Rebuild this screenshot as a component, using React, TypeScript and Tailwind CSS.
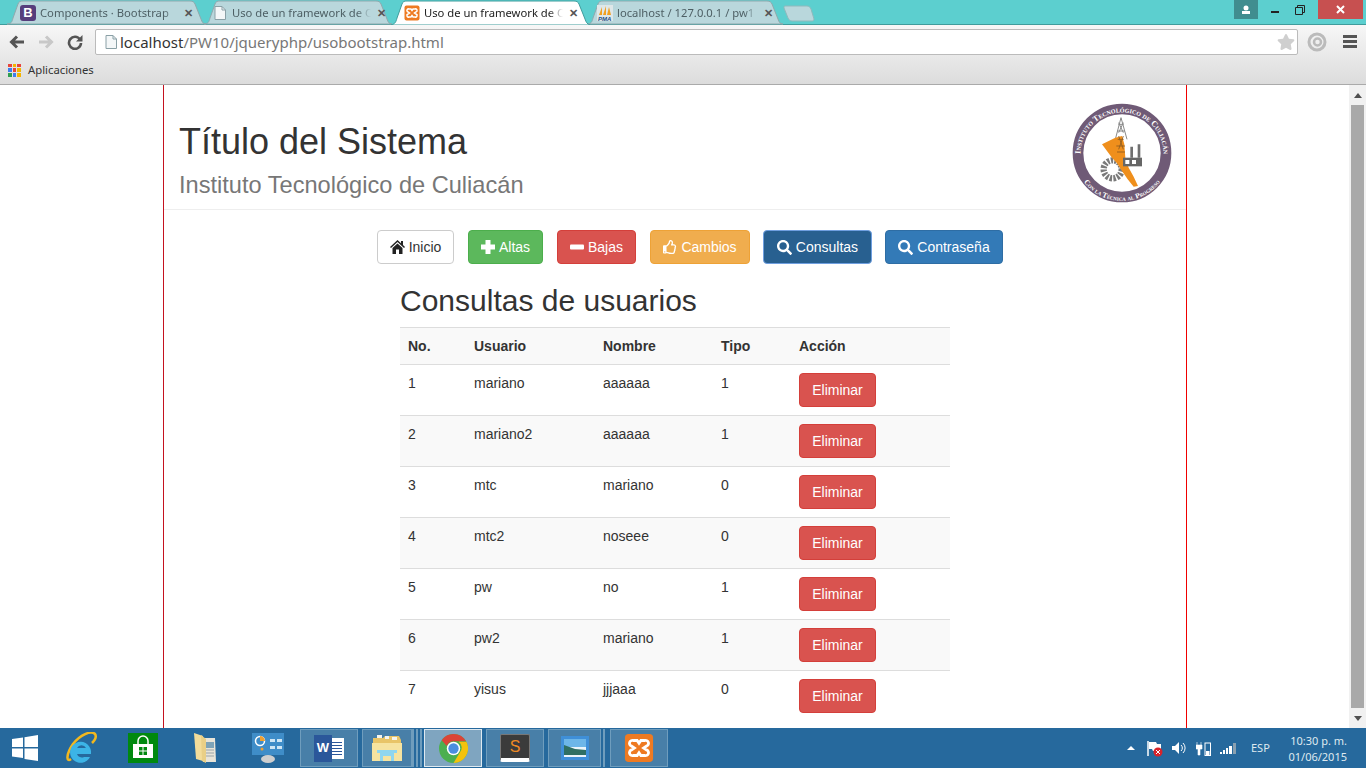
import React from 'react';
import { FaRegThumbsUp, FaSearch, FaStar } from 'react-icons/fa';

const usuarios = [
  { no: 1, usuario: 'mariano', nombre: 'aaaaaa', tipo: 1 },
  { no: 2, usuario: 'mariano2', nombre: 'aaaaaa', tipo: 1 },
  { no: 3, usuario: 'mtc', nombre: 'mariano', tipo: 0 },
  { no: 4, usuario: 'mtc2', nombre: 'noseee', tipo: 0 },
  { no: 5, usuario: 'pw', nombre: 'no', tipo: 1 },
  { no: 6, usuario: 'pw2', nombre: 'mariano', tipo: 1 },
  { no: 7, usuario: 'yisus', nombre: 'jjjaaa', tipo: 0 },
];

const BootstrapFav = () => (
  <div className="w-[16px] h-[16px] rounded-[3px] bg-[#563d7c] text-white text-[13px] font-bold flex items-center justify-center font-['Liberation_Sans',sans-serif]">B</div>
);

const PageFav = () => (
  <svg width="16" height="16" viewBox="0 0 16 16">
    <path d="M3 1.500h7l3.500 3.500v9.500H3z" fill="#f4f7f8" stroke="#8aa0a6" />
    <path d="M10 1.500V5h3.500" fill="none" stroke="#8aa0a6" />
  </svg>
);

const XamppIcon = ({ size = 16 }: { size?: number }) => (
  <svg width={size} height={size} viewBox="0 0 32 32">
    <rect x="1" y="1" width="30" height="30" rx="4" fill="#ee7a22" />
    <path d="M10 8h4l2 3 2-3h4a3 3 0 0 1 2 6l-3 2 3 2a3 3 0 0 1-2 6h-4l-2-3-2 3h-4a3 3 0 0 1-2-6l3-2-3-2a3 3 0 0 1 2-6z" fill="none" stroke="#fff" strokeWidth="3" />
  </svg>
);

const PmaFav = () => (
  <svg width="16" height="16" viewBox="0 0 16 16">
    <rect width="16" height="16" fill="#dfe7e8" />
    <path d="M2 10 5 2l0 8zM6 10l3-9 0 9zM10 10l2-8 2 8z" fill="#f0a020" />
    <text x="1" y="15.500" fontSize="6" fontWeight="bold" fontStyle="italic" fill="#1d4f86" fontFamily="Liberation Sans">PMA</text>
  </svg>
);

type TabProps = { title: string; icon: React.ReactNode; active?: boolean; width: number; className: string };

const Tab = ({ title, icon, active, width, className }: TabProps) => (
  <div className={`relative h-[25px] shrink-0 ${className} ${active ? 'z-10 text-[#222]' : 'text-[#4d5f64]'}`} style={{ width }}>
    <svg className="absolute inset-0" width={width} height="25" viewBox={`0 0 ${width} 25`}>
      <path
        d={`M0 ${active ? 25 : 24} C4 24 5 22 6 18 L11 4 C12 1.500 13 1 16 1 L${width - 16} 1 C${width - 13} 1 ${width - 12} 2 ${width - 11} 4 L${width - 5} 19 C${width - 4} 22 ${width - 3} 24 ${width} ${active ? 25 : 24} Z`}
        fill={active ? '#fff' : '#b9d7dc'}
        stroke={active ? '#3f9c9c' : '#8fa9ad'}
        strokeWidth="1"
      />
    </svg>
    <div className="relative flex items-center h-[25px] pt-[1px]">
      <div className="w-[16px] h-[16px] shrink-0">{icon}</div>
      <span className="ml-[4px] flex-1 min-w-0 text-[11.250px] whitespace-nowrap [mask-image:linear-gradient(to_right,black_calc(100%-14px),transparent)]">{title}</span>
      <span className="ml-[5px] w-[10px] text-center text-[#555] text-[11px] font-bold font-['Liberation_Sans',sans-serif]">✕</span>
    </div>
  </div>
);

const BrowserChrome = () => (
  <div className="shrink-0 font-['Noto_Sans',sans-serif]">
    <div className="h-[25px] bg-[#5ccfcf] flex items-start relative">
      <div className="absolute left-0 right-0 bottom-0 h-[1px] bg-[#3f9c9c]" />
      <div className="flex pl-[7px]">
        <Tab title="Components · Bootstrap" icon={<BootstrapFav />} width={199} className="[&>div:last-child]:pl-[13px] [&>div:last-child]:pr-[13px]" />
        <Tab title="Uso de un framework de C" icon={<PageFav />} width={188} className="-ml-[2px] [&>div:last-child]:pl-[8px] [&>div:last-child]:pr-[6px]" />
        <Tab title="Uso de un framework de C" icon={<XamppIcon />} active width={199} className="-ml-[1px] [&>div:last-child]:pl-[13px] [&>div:last-child]:pr-[12px]" />
        <Tab title="localhost / 127.0.0.1 / pw1" icon={<PmaFav />} width={196} className="-ml-[3px] [&>div:last-child]:pl-[10px] [&>div:last-child]:pr-[10px]" />
        <svg className="mt-[5px] shrink-0" width="32" height="17" viewBox="0 0 32 17">
          <path d="M2 1h22c2 0 3 1 4 3l3 10c0 1.500-1 2-2 2H9c-2 0-3-1-4-3L1 3c0-1 0-2 1-2z" fill="#b9d7dc" stroke="#8fb9bc" />
        </svg>
      </div>
      <div className="ml-auto flex items-start relative">
        <div className="w-[24px] h-[19px] bg-[#408d8f] flex items-center justify-center">
          <svg width="10" height="10" viewBox="0 0 10 10"><circle cx="5" cy="3" r="2.500" fill="#fff" /><rect x="1" y="6" width="8" height="3" fill="#fff" /></svg>
        </div>
        <div className="w-[60px] h-[19px] flex items-center justify-center gap-[16px]">
          <div className="w-[8px] h-[2px] mt-[5px] bg-[#222]" />
          <svg width="10" height="10" viewBox="0 0 10 10"><path d="M0.500 2.500h7v7h-7zM2.500 2.500v-2h7v7h-2" fill="none" stroke="#222" /></svg>
        </div>
        <div className="w-[45px] h-[19px] mr-[3px] bg-[#c75050] flex items-center justify-center">
          <svg width="9" height="9" viewBox="0 0 9 9"><path d="M1 1l7 7M8 1L1 8" stroke="#fff" strokeWidth="2" /></svg>
        </div>
      </div>
    </div>
    <div className="h-[60px] bg-gradient-to-b from-[#f7f7f7] to-[#dcdcdc] border-b border-[#aaaaaa]">
      <div className="h-[31px] pt-[2px] flex items-center">
        <svg className="ml-[9px]" width="16" height="14" viewBox="0 0 16 14"><path d="M15 7H3M8 1.500 2.500 7 8 12.500" fill="none" stroke="#555" strokeWidth="3" /></svg>
        <svg className="ml-[13px]" width="16" height="14" viewBox="0 0 16 14"><path d="M1 7h12M8 1.500 13.500 7 8 12.500" fill="none" stroke="#c8c8c8" strokeWidth="3" /></svg>
        <svg className="ml-[13px]" width="16" height="16" viewBox="0 0 16 16"><path d="M13 5.500A6 6 0 1 0 14 9" fill="none" stroke="#555" strokeWidth="2.600" /><path d="M15.500 1v6.500H9z" fill="#555" /></svg>
        <div className="ml-[12px] w-[1203px] h-[26px] bg-white border border-[#bbbbbb] rounded-[2px] flex items-center pl-[7px] pr-[2px]">
          <PageFav />
          <span className="ml-[1px] mt-[1px] text-[15px] text-[#333]">localhost<span className="text-[#777]">/PW10/jqueryphp/usobootstrap.html</span></span>
          <FaStar className="ml-auto text-[#cfcfcf] text-[18px]" />
        </div>
        <svg className="ml-[9px]" width="20" height="20" viewBox="0 0 20 20"><circle cx="10" cy="10" r="8" fill="none" stroke="#bbb" strokeWidth="3" /><circle cx="10.500" cy="10" r="3.500" fill="none" stroke="#bbb" strokeWidth="2.500" /></svg>
        <div className="ml-[16px] w-[14px] flex flex-col gap-[2px]">
          <div className="h-[3px] bg-[#555]" />
          <div className="h-[3px] bg-[#555]" />
          <div className="h-[3px] bg-[#555]" />
        </div>
      </div>
      <div className="h-[28px] flex items-center pl-[8px] text-[11.300px] text-[#333]">
        <div className="grid grid-cols-3 gap-[1px] w-[13px] h-[13px]">
          {['#e8453c', '#f4b400', '#e8453c', '#3d7ef0', '#e8453c', '#f4b400', '#2e9e4f', '#3d7ef0', '#f4b400'].map((c, i) => (
            <div key={i} style={{ backgroundColor: c }} />
          ))}
        </div>
        <span className="ml-[7px]">Aplicaciones</span>
      </div>
    </div>
  </div>
);

const Logo = () => (
  <svg width="100" height="100" viewBox="65 41 300 300">
    <defs>
      <path id="arcTop" d="M91 205 A124.500 124.500 0 1 1 339 205" />
      <path id="arcBottom" d="M78 235 A144 144 0 0 0 352 235" />
    </defs>
    <circle cx="215" cy="191" r="132" fill="#fff" stroke="#6f5a76" strokeWidth="32" />
    <text fontSize="25" fontWeight="bold" fill="#fff" fontFamily="Liberation Serif" fontVariant="small-caps">
      <textPath href="#arcTop" startOffset="50%" textAnchor="middle">Instituto Tecnológico de Culiacán</textPath>
    </text>
    <text fontSize="22" fontWeight="bold" fill="#fff" fontFamily="Liberation Serif" fontVariant="small-caps">
      <textPath href="#arcBottom" startOffset="50%" textAnchor="middle">Con la Técnica al Progreso</textPath>
    </text>
    <circle cx="187" cy="240" r="27" fill="none" stroke="#7a7a7a" strokeWidth="19" strokeDasharray="7 4" />
    <path d="M212 85 195 150M212 85l18 65M204 105h16M200 125h24M205 100l14 30M219 100l-14 30" stroke="#8a8a8a" strokeWidth="3" fill="none" />
    <path d="M155 165 175 155 195 145 215 140 222 165 225 205 235 235 250 262 263 290 250 292 232 270 215 245 200 222 185 205 170 185Z" fill="#ef8f1c" />
    <path d="M202 150h18M198 170h26M200 188h24M205 140l14 40M219 140l-14 40" stroke="#8a5a20" strokeWidth="2.500" fill="none" />
    <path d="M240 172h8v33h-8zM262 165h8v40h-8z" fill="#6f6f6f" />
    <rect x="218" y="205" width="57" height="26" fill="#666" />
    <path d="M225 212h12v12h-12zM245 212h12v12h-12z" fill="#fff" />
  </svg>
);

const HomeGlyph = () => (
  <svg width="15" height="14" viewBox="0 0 15 14"><path d="M7.500 0 11 3.200V1h2v4l2 1.900-1 1L7.500 2 1 7.900l-1-1zM2.500 8l5-4.500 5 4.500v6H9V9.500H6V14H2.500z" fill="#222" /></svg>
);

const PlusGlyph = () => (
  <svg width="14" height="14" viewBox="0 0 14 14"><path d="M4.500 0h5v4.500H14v5H9.500V14h-5V9.500H0v-5h4.500z" fill="#fff" /></svg>
);

const MinusGlyph = () => (
  <svg width="14" height="14" viewBox="0 0 14 14"><rect x="0" y="4.500" width="14" height="5" rx="1" fill="#fff" /></svg>
);

type BtnProps = { className: string; icon: React.ReactNode; children: string };

const Btn = ({ className, icon, children }: BtnProps) => (
  <button className={`h-[34px] shrink-0 rounded-[4px] border flex items-center justify-center text-[14px] ${className}`}>
    {icon}
    <span className="ml-[4px]">{children}</span>
  </button>
);

const Nav = () => (
  <div className="flex pl-[213px] mt-[20px]">
    <Btn className="w-[77px] bg-white border-[#cccccc] text-[#333333]" icon={<HomeGlyph />}>Inicio</Btn>
    <Btn className="w-[75px] ml-[14px] bg-[#5cb85c] border-[#4cae4c] text-white" icon={<PlusGlyph />}>Altas</Btn>
    <Btn className="w-[79px] ml-[14px] bg-[#d9534f] border-[#d43f3a] text-white" icon={<MinusGlyph />}>Bajas</Btn>
    <Btn className="w-[100px] ml-[14px] bg-[#f0ad4e] border-[#eea236] text-white" icon={<FaRegThumbsUp className="text-[14px]" />}>Cambios</Btn>
    <Btn className="w-[109px] ml-[13px] bg-[#286090] border-[#6f9fe0] text-white" icon={<FaSearch className="text-[15px]" />}>Consultas</Btn>
    <Btn className="w-[118px] ml-[13px] bg-[#337ab7] border-[#2e6da4] text-white" icon={<FaSearch className="text-[15px]" />}>Contraseña</Btn>
  </div>
);

const Tabla = () => (
  <div className="ml-[236px] w-[550px]">
    <h2 className="text-[30px] leading-[33px] text-[#333333] mt-[20px] mb-[10px]">Consultas de usuarios</h2>
    <table className="w-[550px] table-fixed border-collapse text-[14px] text-[#333333]">
      <thead>
        <tr className="bg-[#f9f9f9] border-t border-[#dddddd] text-left">
          <th className="w-[66px] p-[8px] font-bold leading-[20px]">No.</th>
          <th className="w-[129px] p-[8px] font-bold leading-[20px]">Usuario</th>
          <th className="w-[118px] p-[8px] font-bold leading-[20px]">Nombre</th>
          <th className="w-[78px] p-[8px] font-bold leading-[20px]">Tipo</th>
          <th className="p-[8px] font-bold leading-[20px]">Acción</th>
        </tr>
      </thead>
      <tbody>
        {usuarios.map((u, i) => (
          <tr key={u.no} className={`border-t border-[#dddddd] ${i % 2 === 1 ? 'bg-[#f9f9f9]' : 'bg-white'}`}>
            <td className="p-[8px] align-top leading-[20px]">{u.no}</td>
            <td className="p-[8px] align-top leading-[20px]">{u.usuario}</td>
            <td className="p-[8px] align-top leading-[20px]">{u.nombre}</td>
            <td className="p-[8px] align-top leading-[20px]">{u.tipo}</td>
            <td className="p-[8px] align-top leading-[20px]">
              <button className="block h-[34px] w-[77px] rounded-[4px] border border-[#d43f3a] bg-[#d9534f] text-white text-[14px]">Eliminar</button>
            </td>
          </tr>
        ))}
      </tbody>
    </table>
  </div>
);

const Scrollbar = () => (
  <div className="w-[17px] shrink-0 bg-[#f1f1f1] flex flex-col items-center">
    <div className="h-[20px] flex items-center">
      <div className="w-0 h-0 border-x-[4px] border-x-transparent border-b-[5px] border-b-[#505050]" />
    </div>
    <div className="w-[13px] flex-1 bg-[#a9a9a9]" />
    <div className="h-[20px] flex items-center">
      <div className="w-0 h-0 border-x-[4px] border-x-transparent border-t-[5px] border-t-[#505050]" />
    </div>
  </div>
);

const TaskBtn = ({ children, w, active }: { children: React.ReactNode; w: string; active?: boolean }) => (
  <div className={`${w} h-[38px] shrink-0 flex items-center justify-center border ${active ? 'bg-[#7fa5c0] border-[#dfe9f0]' : 'bg-[#487fa8] border-[#6f9dbd]'}`}>
    {children}
  </div>
);

const WindowsLogo = () => (
  <svg width="26" height="26" viewBox="0 0 26 26"><path d="M0 4l11-1.500V12H0zM12.500 2.300 26 0v12H12.500zM0 13.500h11v9.500L0 21.500zM12.500 13.500H26V26l-13.500-2z" fill="#fff" /></svg>
);

const IeIcon = () => (
  <svg width="32" height="32" viewBox="0 0 32 32">
    <path d="M6 27C1 31 1 22 8 12 15 3 26-2 30 2c2 3-1 7-3 9" fill="none" stroke="#f2b81f" strokeWidth="2.500" />
    <path d="M26 19a10.500 10.500 0 1 0-1 6h-6a5 5 0 0 1-7-3h14zM12 16a5 5 0 0 1 9 0z" fill="#3cb4e6" fillRule="evenodd" />
  </svg>
);

const StoreIcon = () => (
  <svg width="30" height="30" viewBox="0 0 30 30">
    <rect width="30" height="30" fill="#00890f" />
    <path d="M10 11V8a5 5 0 0 1 10 0v3" fill="none" stroke="#fff" strokeWidth="1.500" />
    <path d="M5 11h20v14H5z" fill="#fff" />
    <path d="M11 14h3.500v3.500H11zM15.500 14H19v3.500h-3.500zM11 18.500h3.500V22H11zM15.500 18.500H19V22h-3.500z" fill="#00890f" />
  </svg>
);

const FolderIcon = () => (
  <svg width="24" height="32" viewBox="0 0 24 32">
    <path d="M1 1l9 3v25l-7-2z" fill="#f2dc9a" />
    <path d="M9 6h13l1 24H10z" fill="#e8e4d8" />
    <path d="M13 10h8v6h-8z" fill="#7da3b8" />
    <path d="M13 18h8M13 21h8M13 24h8" stroke="#9aa4a8" />
    <path d="M8 3l5 4v24l-4-2z" fill="#e9cf86" />
  </svg>
);

const PanelIcon = () => (
  <svg width="32" height="30" viewBox="0 0 32 30">
    <rect width="32" height="22" fill="#3f8dc8" />
    <circle cx="8" cy="8" r="4.500" fill="none" stroke="#fff" strokeWidth="1.500" />
    <path d="M8 8V3a5 5 0 0 1 5 5z" fill="#f0a030" />
    <path d="M18 6h5v3h-5zM25 6h5v3h-5zM18 13h5v3h-5zM25 13h5v3h-5z" fill="#cfe6f5" />
    <circle cx="10" cy="16" r="1.500" fill="#f0a030" />
    <ellipse cx="16" cy="26" rx="7" ry="4" fill="#cfcfcf" />
  </svg>
);

const WordIcon = () => (
  <div className="relative w-[30px] h-[27px]">
    <div className="absolute right-0 top-[3px] w-[14px] h-[21px] bg-white flex flex-col justify-center gap-[2px] px-[2px]">
      {[0, 1, 2, 3, 4].map((n) => <div key={n} className="h-[1px] bg-[#2b579a]" />)}
    </div>
    <div className="absolute left-0 top-0 w-[18px] h-[27px] bg-[#2b579a] flex items-center justify-center text-white text-[13px] font-bold font-['Liberation_Sans',sans-serif]">W</div>
  </div>
);

const ExplorerIcon = () => (
  <svg width="32" height="28" viewBox="0 0 32 28">
    <path d="M2 4h10l2-2h14l2 4v20H2z" fill="#e8c468" />
    <path d="M6 1h5v3H6zM14 2h4v3h-4zM21 3h5v3h-5z" fill="#f4f4ee" />
    <path d="M1 9h30v18H1z" fill="#f6e3a0" />
    <path d="M6 16h20v3h-3v8h-3v-5h-8v5H9v-8H6z" fill="#8fd6ef" />
  </svg>
);

const ChromeIcon = () => (
  <svg width="29" height="29" viewBox="0 0 28 28">
    <circle cx="14" cy="14" r="14" fill="#4caf50" />
    <path d="M14 0a14 14 0 0 1 12.100 7H14a7 7 0 0 0-6.500 4.500L2.600 6A14 14 0 0 1 14 0z" fill="#db4437" />
    <path d="M26.500 7.500A14 14 0 0 1 14 28l6-10a7 7 0 0 0-1-10.500z" fill="#f4c20d" />
    <circle cx="14" cy="14" r="6.500" fill="#fff" />
    <circle cx="14" cy="14" r="5" fill="#4a8ee0" />
  </svg>
);

const SublimeIcon = () => (
  <div className="w-[30px] h-[28px] rounded-[2px] bg-[#3b3b3b] border border-[#777] border-b-[4px] border-b-white flex items-center justify-center text-[#f08a24] text-[16px] font-['Liberation_Sans',sans-serif]">S</div>
);

const PhotoIcon = () => (
  <svg width="28" height="24" viewBox="0 0 28 24">
    <rect x="0" y="0" width="28" height="24" fill="#3f8fd8" />
    <rect x="3" y="3" width="22" height="18" fill="#eaf4fa" />
    <path d="M3 3h22v8H3z" fill="#6db6e8" />
    <path d="M3 9 14 13l11 1v5H3z" fill="#2f6f63" />
  </svg>
);

const Taskbar = () => (
  <div className="h-[40px] shrink-0 bg-[#26699d] flex items-center font-['Noto_Sans',sans-serif]">
    <div className="w-[50px] flex justify-center"><WindowsLogo /></div>
    <div className="w-[62px] flex justify-center"><IeIcon /></div>
    <div className="w-[62px] flex justify-center"><StoreIcon /></div>
    <div className="w-[62px] flex justify-center"><FolderIcon /></div>
    <div className="w-[64px] flex justify-center"><PanelIcon /></div>
    <TaskBtn w="w-[58px]"><WordIcon /></TaskBtn>
    <div className="w-[4px]" />
    <TaskBtn w="w-[50px]"><ExplorerIcon /></TaskBtn>
    <div className="w-[10px] h-[38px] flex justify-between">
      <div className="w-[2px] bg-[#6f9dbd]" /><div className="w-[2px] bg-[#6f9dbd]" /><div className="w-[2px] bg-[#6f9dbd]" />
    </div>
    <div className="w-[2px]" />
    <TaskBtn w="w-[58px]" active><ChromeIcon /></TaskBtn>
    <div className="w-[4px]" />
    <TaskBtn w="w-[58px]"><SublimeIcon /></TaskBtn>
    <div className="w-[4px]" />
    <TaskBtn w="w-[53px]"><PhotoIcon /></TaskBtn>
    <div className="w-[2px] h-[38px] ml-[2px] bg-[#6f9dbd]" />
    <div className="w-[5px]" />
    <TaskBtn w="w-[58px]"><XamppIcon size={30} /></TaskBtn>
    <div className="ml-[459px] flex items-center text-white">
      <div className="w-0 h-0 border-x-[4px] border-x-transparent border-b-[4px] border-b-white" />
      <svg className="ml-[12px]" width="16" height="17" viewBox="0 0 16 17">
        <path d="M1 1v15" stroke="#fff" strokeWidth="1.500" />
        <path d="M2 2h7l1 2h4v7H6l-1-2H2z" fill="#fff" />
        <circle cx="11" cy="12" r="4.500" fill="#d8232a" />
        <path d="M9 10l4 4M13 10l-4 4" stroke="#fff" />
      </svg>
      <svg className="ml-[9px]" width="14" height="14" viewBox="0 0 14 14">
        <path d="M0 5h3l4-4v12L3 9H0z" fill="#fff" />
        <path d="M9 4a4 4 0 0 1 0 6M11 2a7 7 0 0 1 0 10" fill="none" stroke="#fff" />
      </svg>
      <svg className="ml-[10px]" width="15" height="15" viewBox="0 0 15 15">
        <path d="M1 1v3M5 1v3M0 4h6v4H4v6H2V8H0z" fill="#fff" stroke="#fff" strokeWidth="0.600" />
        <rect x="9" y="2" width="5.500" height="12.500" fill="none" stroke="#fff" />
        <rect x="10" y="10" width="3.500" height="4" fill="#fff" />
      </svg>
      <div className="ml-[9px] flex items-end gap-[1px] h-[11px]">
        <div className="w-[2px] h-[2px] bg-white" />
        <div className="w-[2px] h-[4px] bg-white" />
        <div className="w-[2px] h-[6px] bg-white" />
        <div className="w-[3px] h-[8px] bg-white" />
        <div className="w-[3px] h-[11px] bg-[#8aa0b0]" />
      </div>
      <span className="ml-[15px] text-[11px] text-[#dfe9f0]">ESP</span>
    </div>
    <div className="ml-auto mr-[19px] mt-[2px] text-[11px] leading-[16px] text-[#dfe9f0] text-right">
      <div>10:30 p. m.</div>
      <div>01/06/2015</div>
    </div>
  </div>
);

export default function App() {
  return (
    <div className="w-[1366px] h-[768px] overflow-hidden flex flex-col bg-white font-['Liberation_Sans',sans-serif]">
      <BrowserChrome />
      <div className="flex-1 min-h-0 flex">
        <div className="flex-1 min-w-0 pl-[163px]">
          <div className="w-[1024px] h-full border-x border-l-[#c4121f] border-r-[#f00000] overflow-hidden">
            <header className="h-[125px] border-b border-[#eeeeee] flex">
              <div className="pl-[15px] flex-1">
                <h1 className="text-[36px] leading-[40px] text-[#333333] mt-[37px]">Título del Sistema</h1>
                <p className="text-[23.600px] leading-[26px] text-[#777777] mt-[10px]">Instituto Tecnológico de Culiacán</p>
              </div>
              <div className="pt-[18px] pr-[14px]"><Logo /></div>
            </header>
            <Nav />
            <Tabla />
          </div>
        </div>
        <Scrollbar />
      </div>
      <Taskbar />
    </div>
  );
}
